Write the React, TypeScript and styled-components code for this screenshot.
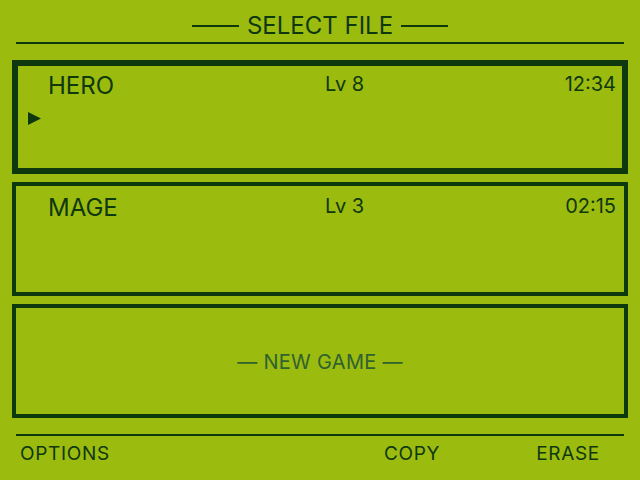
import React from 'react';
import styled, { createGlobalStyle } from 'styled-components';

const ink = '#0f380f';
const mid = '#306230';
const screen = '#9bbb0f';

const GlobalStyle = createGlobalStyle`
  html, body {
    margin: 0;
    padding: 0;
    background: ${screen};
  }
  body {
    font-family: Inter, 'Noto Sans', sans-serif;
    color: ${ink};
  }
`;

const Screen = styled.div`
  width: 640px;
  height: 480px;
  box-sizing: border-box;
  padding: 8px 12px 0;
  display: flex;
  flex-direction: column;
  overflow: hidden;
`;

const Header = styled.header`
  margin: 0 4px;
  padding: 3px 0 2px;
  border-bottom: 2px solid ${ink};
  display: flex;
  justify-content: center;
`;

const Title = styled.h1`
  margin: 0;
  font-size: 24px;
  line-height: 29px;
  font-weight: 400;
  display: flex;
  align-items: center;
  gap: 8px;

  &::before,
  &::after {
    content: '';
    width: 47px;
    height: 2px;
    background: ${ink};
  }
`;

const SlotList = styled.div`
  margin-top: 16px;
  display: flex;
  flex-direction: column;
  gap: 8px;
`;

const Slot = styled.div<{ $selected?: boolean }>`
  height: 114px;
  box-sizing: border-box;
  border: 4px solid ${ink};
  box-shadow: ${(p) => (p.$selected ? `inset 0 0 0 2px ${ink}` : 'none')};
  padding: 10px 8px 10px 12px;
  display: grid;
  grid-template-columns: 20px 277px auto 1fr;
  grid-template-rows: auto auto;
  align-items: start;
  align-content: start;
`;

const Name = styled.div`
  grid-column: 2;
  font-size: 24px;
  line-height: 24px;
`;

const Level = styled.div`
  grid-column: 3;
  font-size: 20px;
  line-height: 21px;
`;

const Time = styled.div`
  grid-column: 4;
  justify-self: end;
  font-size: 20px;
  line-height: 21px;
`;

const Cursor = styled.svg`
  grid-column: 1;
  grid-row: 2;
  margin-top: 14px;
  display: block;
`;

const EmptySlot = styled.div`
  height: 114px;
  box-sizing: border-box;
  border: 4px solid ${ink};
  display: flex;
  align-items: center;
  justify-content: center;
  color: ${mid};
  font-size: 20px;
  letter-spacing: 0.3px;
  padding-top: 2px;
`;

const Footer = styled.footer`
  margin: 16px 4px 0;
  padding: 6px 24px 0 4px;
  border-top: 2px solid ${ink};
  display: flex;
  gap: 96px;
`;

const FooterItem = styled.span<{ $push?: boolean }>`
  font-size: 19px;
  line-height: 24px;
  letter-spacing: 0.7px;
  margin-left: ${(p) => (p.$push ? 'auto' : '0')};
`;

type Save = { name: string; level: number; time: string };

const saves: Save[] = [
  { name: 'HERO', level: 8, time: '12:34' },
  { name: 'MAGE', level: 3, time: '02:15' },
];

export default function App() {
  const selected = 0;
  return (
    <>
      <GlobalStyle />
      <Screen>
        <Header>
          <Title>SELECT FILE</Title>
        </Header>
        <SlotList>
          {saves.map((s, i) => (
            <Slot key={s.name} $selected={i === selected}>
              <Name>{s.name}</Name>
              <Level>Lv {s.level}</Level>
              <Time>{s.time}</Time>
              {i === selected && (
                <Cursor width="14" height="13" viewBox="0 0 14 13">
                  <polygon points="0,0 13,6.5 0,13" fill={ink} />
                </Cursor>
              )}
            </Slot>
          ))}
          <EmptySlot>— NEW GAME —</EmptySlot>
        </SlotList>
        <Footer>
          <FooterItem>OPTIONS</FooterItem>
          <FooterItem $push>COPY</FooterItem>
          <FooterItem>ERASE</FooterItem>
        </Footer>
      </Screen>
    </>
  );
}
